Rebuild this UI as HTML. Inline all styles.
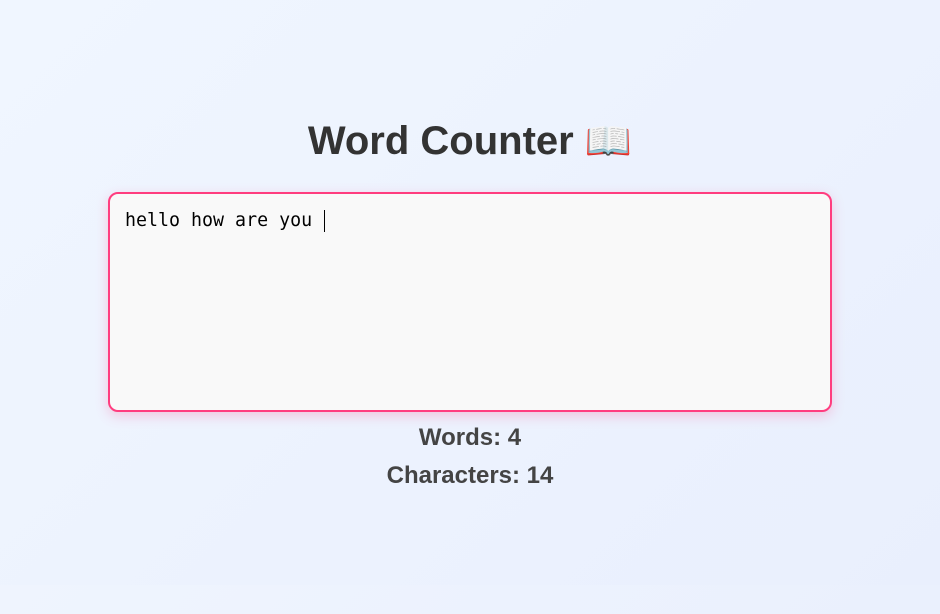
<!DOCTYPE html>
<html><head><style>
html,body{margin:0;padding:0;}
body{width:940px;height:614px;background:linear-gradient(135deg,#f2f7ff,#eaf0fd);font-family:"Liberation Sans",Arial,sans-serif;position:relative;overflow:hidden;}
.main{position:absolute;left:0;top:0;width:940px;height:585px;background:linear-gradient(135deg,#f0f6ff,#e9effd);}
h1{position:absolute;left:0;width:940px;top:117px;margin:0;text-align:center;font-size:40px;font-weight:bold;color:#333;line-height:48px;}
.ta{position:absolute;left:108px;top:192px;width:720px;height:216px;border:2px solid #ff3d7f;border-radius:10px;background:#f9f9f9;box-shadow:0 4px 12px rgba(255,64,129,0.25);}
.txt{position:absolute;left:15px;top:16px;font-family:"DejaVu Sans Mono","Liberation Mono",monospace;font-size:18.3px;color:#000;line-height:22px;}
.cur{display:inline-block;width:1px;height:22px;background:#000;vertical-align:top;margin-left:1px;}
.s{position:absolute;left:0;width:940px;text-align:center;font-weight:bold;font-size:24px;color:#444;line-height:28px;}
</style></head><body>
<div class="main">
<h1>Word Counter <span style="font-size:38px">📖</span></h1>
<div class="ta"><div class="txt">hello how are you <span class="cur"></span></div></div>
<div class="s" style="top:424px">Words: 4</div>
<div class="s" style="top:462px">Characters: 14</div>
</div>
</body></html>
